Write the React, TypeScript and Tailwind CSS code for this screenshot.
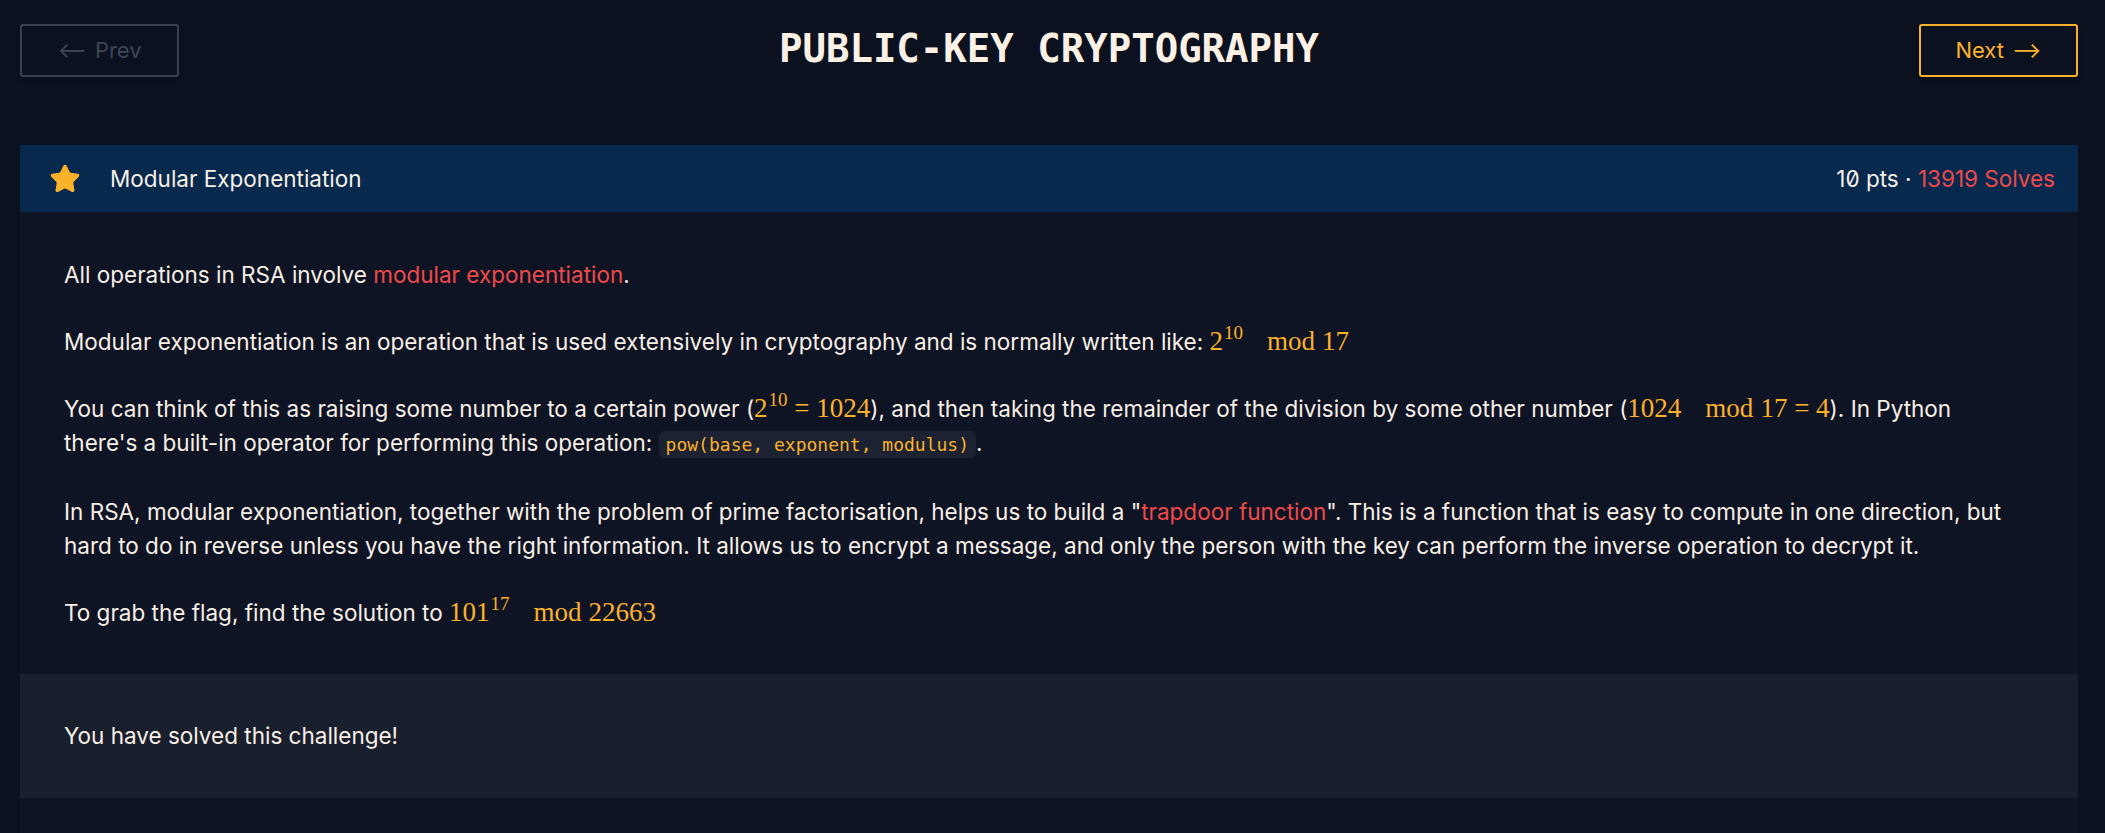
import { Star } from "lucide-react";

const sans = { fontFamily: "Inter, 'Noto Sans', sans-serif" };

function M({ children }: { children: React.ReactNode }) {
  return (
    <span className="text-[27px] leading-none text-[#fbb12a] [font-family:'Liberation_Serif',serif]">
      {children}
    </span>
  );
}

function Sup({ children }: { children: React.ReactNode }) {
  return <sup className="relative -top-[11px] ml-[1px] text-[19px]">{children}</sup>;
}

function Mod() {
  return <span className="ml-[24px] mr-[7px]">mod</span>;
}

export default function App() {
  return (
    <div className="min-h-screen bg-[#0c1120] pl-[20px] pr-[27px] text-[#f8efe6]" style={sans}>
      {/* top nav */}
      <div className="flex items-center justify-between pt-[24px]">
        <button className="flex h-[53px] w-[159px] items-center justify-center gap-2 rounded-[3px] border-2 border-[#3b404c] text-[22px] text-[#3f4553] shadow-md">
          <span>⟵</span>
          <span>Prev</span>
        </button>
        <h1 className="-mt-[4px] text-[39px] font-bold leading-[53px] text-[#fdf1e6] [font-family:'DejaVu_Sans_Mono',monospace]">
          PUBLIC-KEY CRYPTOGRAPHY
        </h1>
        <button className="flex h-[53px] w-[159px] items-center justify-center gap-2 rounded-[3px] border-2 border-[#fbb12a] text-[22px] text-[#fbb12a] shadow-md">
          <span>Next</span>
          <span>⟶</span>
        </button>
      </div>

      {/* challenge card */}
      <div className="mt-[68px]">
        <div className="flex h-[67px] items-center justify-between bg-[#06294d] pl-[29px] pr-[23px] text-[22.5px]">
          <div className="flex items-center gap-[29px]">
            <Star size={32} className="fill-[#fbb12a] text-[#fbb12a]" strokeWidth={1.5} />
            <span>Modular Exponentiation</span>
          </div>
          <div className="slashed-zero">
            10 pts · <span className="text-[#ef4a4a]">13919 Solves</span>
          </div>
        </div>

        <div className="bg-[#0f1424] pb-[37px]">
          <div className="flex flex-col gap-[33px] px-[44px] pt-[46px] pb-[44px] text-[22.5px] leading-[34px]">
            <p>
              All operations in RSA involve <span className="text-[#ef4a4a]">modular exponentiation</span>.
            </p>
            <p>
              Modular exponentiation is an operation that is used extensively in cryptography and is normally written
              like:{" "}
              <M>
                2<Sup>10</Sup>
                <Mod />
                17
              </M>
            </p>
            <p>
              You can think of this as raising some number to a certain power (
              <M>
                2<Sup>10</Sup> = 1024
              </M>
              ), and then taking the remainder of the division by some other number (
              <M>
                1024
                <Mod />
                17 = 4
              </M>
              ). In Python
              <br />
              there's a built-in operator for performing this operation:{" "}
              <code className="rounded-md bg-[#1c2232] px-[7px] py-[3px] text-[18px] text-[#fbb12a] [font-family:'DejaVu_Sans_Mono',monospace]">
                pow(base, exponent, modulus)
              </code>
              .
            </p>
            <p>
              In RSA, modular exponentiation, together with the problem of prime factorisation, helps us to build a "
              <span className="text-[#ef4a4a]">trapdoor function</span>". This is a function that is easy to compute in
              one direction, but
              <br />
              hard to do in reverse unless you have the right information. It allows us to encrypt a message, and only
              the person with the key can perform the inverse operation to decrypt it.
            </p>
            <p>
              To grab the flag, find the solution to{" "}
              <M>
                101<Sup>17</Sup>
                <Mod />
                22663
              </M>
            </p>
          </div>

          <div className="flex h-[124px] items-center bg-[#1a1f2e] px-[44px] text-[22.5px]">
            You have solved this challenge!
          </div>
        </div>
      </div>
    </div>
  );
}
